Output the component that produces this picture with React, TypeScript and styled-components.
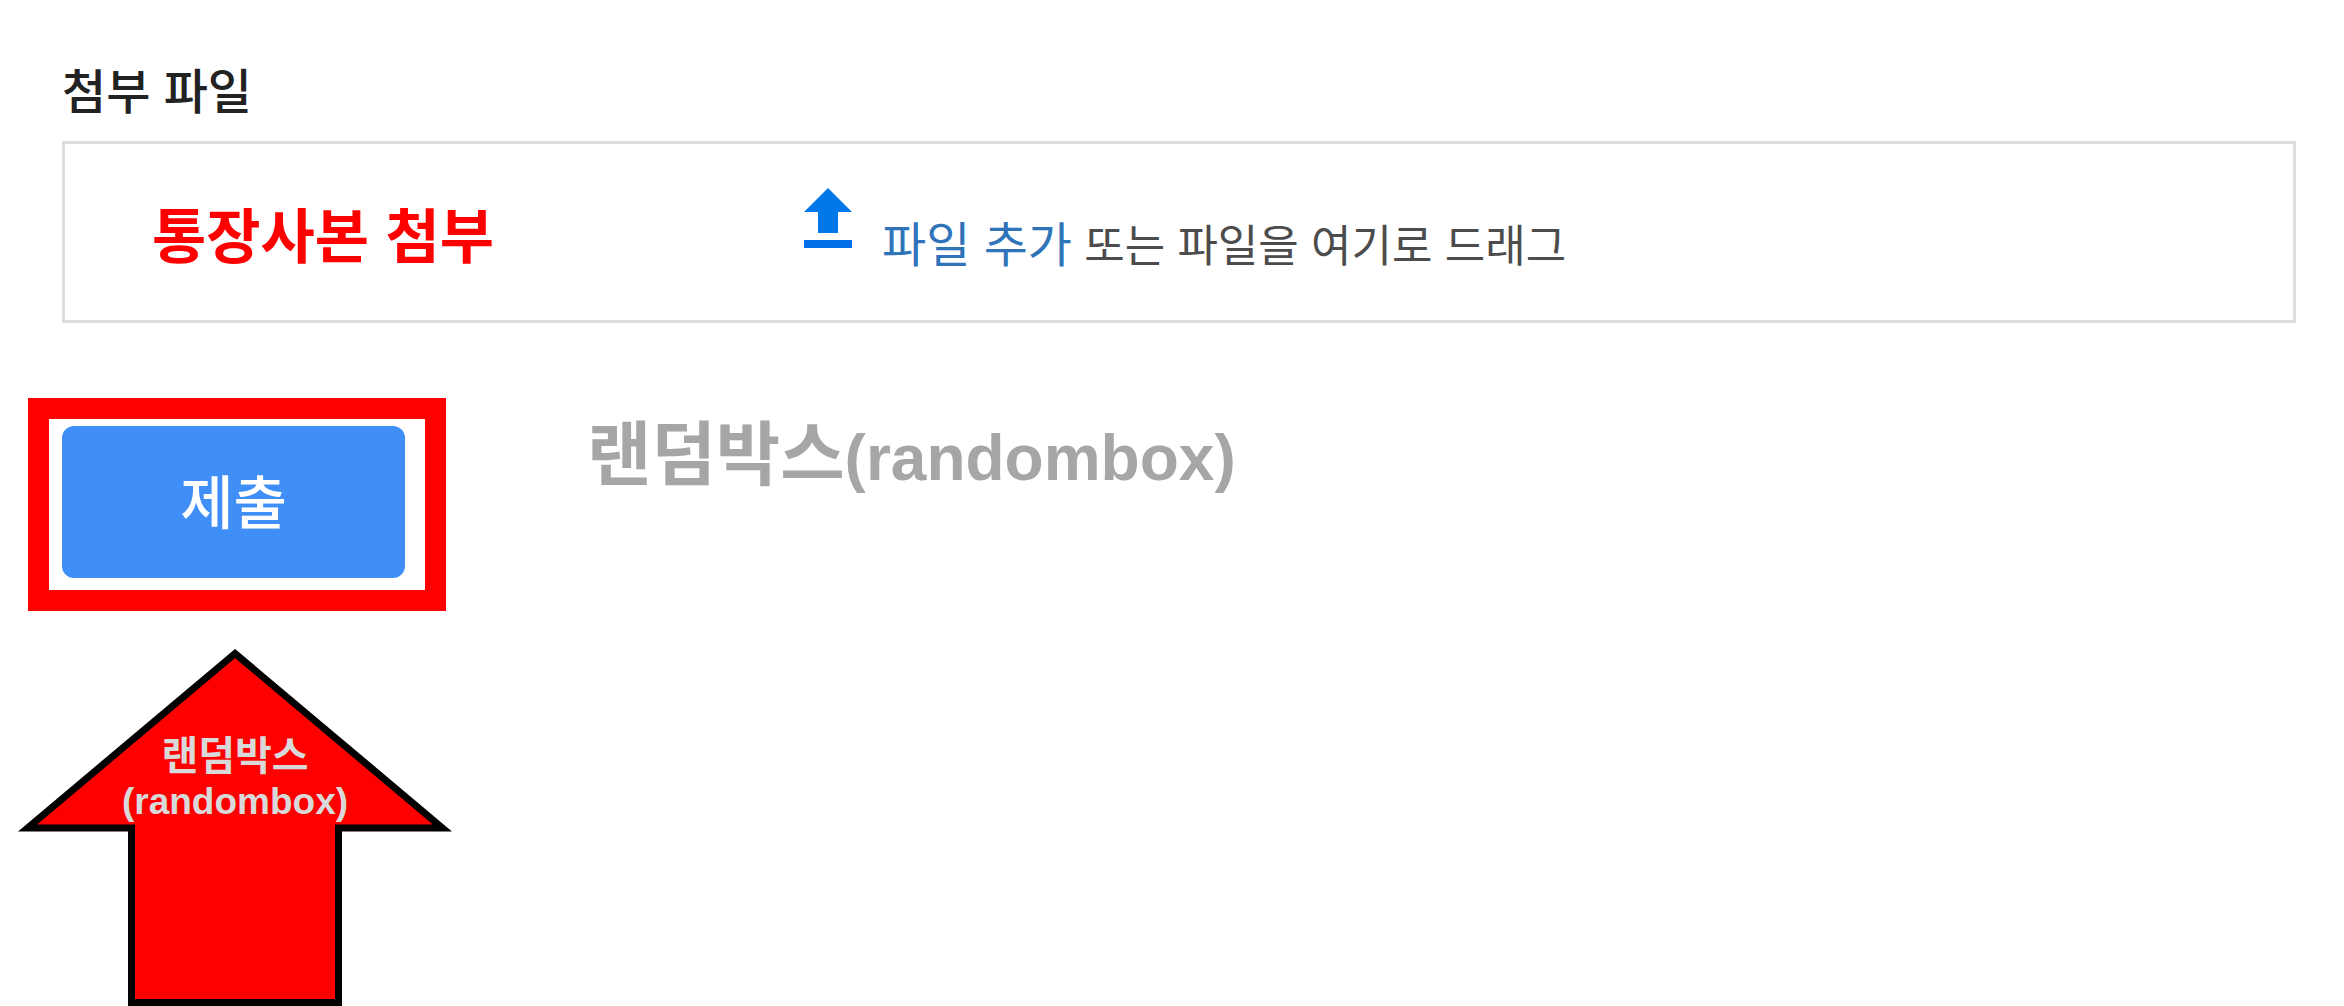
import React from "react";
import styled, { createGlobalStyle } from "styled-components";

const GlobalStyle = createGlobalStyle`
  *, *::before, *::after { box-sizing: border-box; }
  body {
    margin: 0;
    background: #ffffff;
    color: #222222;
    font-family: "Liberation Sans", "Noto Sans CJK KR", sans-serif;
  }
`;

const Form = styled.form`
  display: flex;
  flex-direction: column;
  padding: 64px 48px 0 62px;
`;

const Label = styled.h2`
  margin: 0 0 19px;
  font-size: 48px;
  line-height: 58px;
  font-weight: 500;
`;

const DropZone = styled.section`
  display: grid;
  grid-template-columns: 652px 1fr;
  align-items: center;
  height: 182px;
  padding: 0 24px 0 87px;
  border: 3px solid #dedede;
`;

const Note = styled.strong`
  padding-top: 12px;
  color: #ff0000;
  font-size: 59px;
  line-height: 72px;
  font-weight: 700;
`;

const Picker = styled.div`
  display: flex;
  align-items: flex-end;
  gap: 30px;
`;

const UploadIcon = styled.svg`
  flex: none;
  width: 48px;
  height: 60px;
  margin-bottom: 28px;
`;

const Prompt = styled.p`
  margin: 0;
  color: #4c4c4c;
  font-size: 44px;
  line-height: 58px;
  white-space: nowrap;
`;

const AddLink = styled.a`
  color: #2f74b9;
  font-size: 48px;
  text-decoration: none;
`;

const Actions = styled.div`
  display: flex;
  align-items: flex-start;
  gap: 141px;
  margin: 75px 0 0 -34px;
`;

const Highlight = styled.div`
  padding: 7px 20px 12px 13px;
  border: 21px solid #ff0000;
`;

const SubmitButton = styled.button`
  display: block;
  width: 343px;
  height: 152px;
  padding: 0 0 6px;
  border: 0;
  border-radius: 12px;
  background: #408ef7;
  color: #ffffff;
  font-family: inherit;
  font-size: 58px;
  font-weight: 500;
  cursor: pointer;
`;

const Watermark = styled.p`
  margin: 16px 0 0;
  color: #a6a6a6;
  font-size: 64px;
  line-height: 84px;
  font-weight: 700;
  white-space: nowrap;
`;

const WatermarkName = styled.span`
  font-size: 70px;
`;

const Pointer = styled.figure`
  position: relative;
  width: 434px;
  margin: 37px 0 0 -44px;
`;

const ArrowShape = styled.svg`
  display: block;
  width: 434px;
  height: 358px;
`;

const PointerText = styled.figcaption`
  position: absolute;
  top: 85px;
  left: 0;
  width: 100%;
  color: #d9d9d9;
  font-size: 37px;
  line-height: 46px;
  font-weight: 700;
  text-align: center;
`;

const PointerName = styled.span`
  display: block;
  font-size: 40px;
`;

export default function App() {
  return (
    <>
      <GlobalStyle />
      <Form onSubmit={(event: React.FormEvent) => event.preventDefault()}>
        <Label id="attachment-label">첨부 파일</Label>
        <DropZone aria-labelledby="attachment-label">
          <Note>통장사본 첨부</Note>
          <Picker>
            <UploadIcon viewBox="0 0 48 60" aria-hidden="true">
              <path d="M24 0 48 24H34V45H14V24H0Z" fill="#0078ea" />
              <path d="M0 52H48V60H0Z" fill="#006fe8" />
            </UploadIcon>
            <Prompt>
              <AddLink href="#add-file">파일 추가</AddLink> 또는 파일을 여기로 드래그
            </Prompt>
          </Picker>
        </DropZone>

        <Actions>
          <Highlight>
            <SubmitButton type="submit">제출</SubmitButton>
          </Highlight>
          <Watermark>
            <WatermarkName>랜덤박스</WatermarkName>(randombox)
          </Watermark>
        </Actions>

        <Pointer>
          <ArrowShape viewBox="0 0 434 358" aria-hidden="true">
            <path
              d="M217 5.5 424.5 180H320.5V354.5H113.5V180H9.5Z"
              fill="#ff0000"
              stroke="#000000"
              strokeWidth="7"
              strokeMiterlimit="10"
            />
          </ArrowShape>
          <PointerText>
            <PointerName>랜덤박스</PointerName>
            (randombox)
          </PointerText>
        </Pointer>
      </Form>
    </>
  );
}
